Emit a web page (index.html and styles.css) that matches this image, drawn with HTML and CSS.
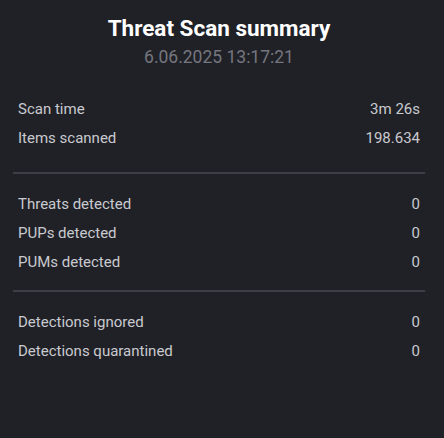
FILE: index.html
```html
<!DOCTYPE html>
<html lang="en">
<head>
    <meta charset="UTF-8">
    <title>Threat Scan summary</title>
    <link rel="stylesheet" href="styles.css">
</head>
<body>
    <div class="summary">
        <div class="header">
            <h1 class="title">Threat Scan summary</h1>
            <div class="date">6.06.2025 13:17:21</div>
        </div>

        <div class="section first">
            <div class="row"><span>Scan time</span><span>3m 26s</span></div>
            <div class="row"><span>Items scanned</span><span>198.634</span></div>
        </div>
        <hr class="divider">

        <div class="section">
            <div class="row"><span>Threats detected</span><span>0</span></div>
            <div class="row"><span>PUPs detected</span><span>0</span></div>
            <div class="row"><span>PUMs detected</span><span>0</span></div>
        </div>
        <hr class="divider">

        <div class="section">
            <div class="row"><span>Detections ignored</span><span>0</span></div>
            <div class="row"><span>Detections quarantined</span><span>0</span></div>
        </div>
    </div>
</body>
</html>
```

FILE: styles.css
```css
body {
    margin: 0;
    background-color: #202127;
    font-family: Roboto, 'Noto Sans', sans-serif;
    height: 100vh;
}
.summary {
    padding: 0 19px 0 13px;
}
.header {
    text-align: center;
    padding-top: 14px;
}
.title {
    margin: 0;
    font-size: 22.5px;
    font-weight: 700;
    line-height: 28px;
    color: #ffffff;
}
.date {
    font-size: 17.5px;
    line-height: 22px;
    margin-top: 4px;
    color: #75767e;
}
.section {
    padding: 16px 5px 0 5px;
}
.section.first {
    padding-top: 27px;
    padding-bottom: 6px;
}
.row {
    display: flex;
    justify-content: space-between;
    font-size: 15px;
    line-height: 29px;
    color: #c9cacf;
}
.divider {
    border: none;
    height: 2px;
    margin: 13px 0 0 0;
    background-color: #3d3e48;
}
```
